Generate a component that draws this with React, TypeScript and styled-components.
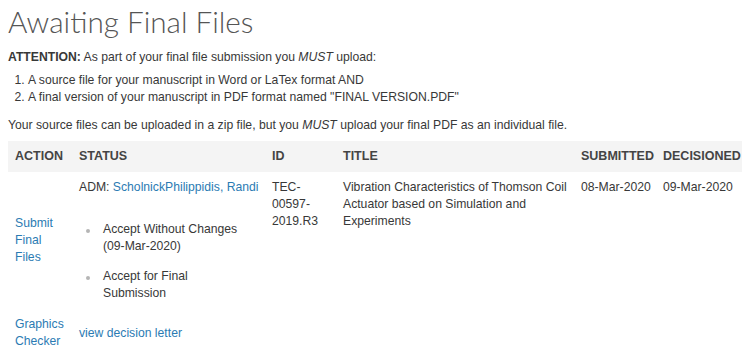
import styled, { createGlobalStyle } from "styled-components";

const GlobalStyle = createGlobalStyle`
  body {
    margin: 0;
    background: #fff;
    font-family: "Liberation Sans", Arial, sans-serif;
    font-size: 12.2px;
    line-height: 17px;
    color: #383838;
  }
`;

const Page = styled.main`
  padding: 3px 8px 0;
`;

const Title = styled.h1`
  margin: 0;
  font-family: Lato, "Open Sans", sans-serif;
  font-weight: 300;
  font-size: 29.7px;
  line-height: 37px;
  color: #555;
`;

const Para = styled.p<{ $top?: number }>`
  margin: ${({ $top }) => $top ?? 0}px 0 0;
`;

const Steps = styled.ol`
  margin: 6px 0 0;
  padding-left: 20px;
`;

const Table = styled.table`
  width: 100%;
  margin-top: 7px;
  border-collapse: collapse;
  table-layout: fixed;
`;

const Head = styled.th<{ $w: number }>`
  box-sizing: border-box;
  width: ${({ $w }) => $w}px;
  background: #f4f4f4;
  text-align: left;
  text-transform: uppercase;
  font-weight: bold;
  font-size: 12.5px;
  color: #444;
  height: 31px;
  padding: 0 0 0 7px;
`;

const Cell = styled.td<{ $middle?: boolean }>`
  padding: 7px 4px 7px 7px;
  vertical-align: ${({ $middle }) => ($middle ? "middle" : "top")};
`;

const LastRow = styled.tr`
  border-bottom: 2px solid #eee;

  td {
    padding-top: 7px;
    padding-bottom: 6px;
    vertical-align: middle;
  }
`;

const Link = styled.a`
  color: #2b7bb3;
  text-decoration: none;
  cursor: pointer;
`;

const Decisions = styled.ul`
  list-style: none;
  margin: 25px 0 0;
  padding: 0 0 0 24px;
`;

const Decision = styled.li`
  position: relative;
  & + & {
    margin-top: 13px;
  }
  &::before {
    content: "";
    position: absolute;
    left: -17px;
    top: 8px;
    width: 4px;
    height: 4px;
    border-radius: 50%;
    background: #b5b5b5;
  }
`;

export default function App() {
  return (
    <>
      <GlobalStyle />
      <Page>
        <Title>Awaiting Final Files</Title>
        <Para $top={9}>
          <b>ATTENTION:</b> As part of your final file submission you <i>MUST</i> upload:
        </Para>
        <Steps>
          <li>A source file for your manuscript in Word or LaTex format AND</li>
          <li>A final version of your manuscript in PDF format named "FINAL VERSION.PDF"</li>
        </Steps>
        <Para $top={11}>
          Your source files can be uploaded in a zip file, but you <i>MUST</i> upload your final PDF
          as an individual file.
        </Para>
        <Table>
          <thead>
            <tr>
              <Head $w={64}>Action</Head>
              <Head $w={193}>Status</Head>
              <Head $w={71}>ID</Head>
              <Head $w={238}>Title</Head>
              <Head $w={82}>Submitted</Head>
              <Head $w={86}>Decisioned</Head>
            </tr>
          </thead>
          <tbody>
            <tr>
              <Cell $middle>
                <Link>
                  Submit
                  <br />
                  Final
                  <br />
                  Files
                </Link>
              </Cell>
              <Cell>
                ADM: <Link>ScholnickPhilippidis, Randi</Link>
                <Decisions>
                  <Decision>
                    Accept Without Changes
                    <br />
                    (09-Mar-2020)
                  </Decision>
                  <Decision>
                    Accept for Final
                    <br />
                    Submission
                  </Decision>
                </Decisions>
              </Cell>
              <Cell>TEC-00597-2019.R3</Cell>
              <Cell>Vibration Characteristics of Thomson Coil Actuator based on Simulation and Experiments</Cell>
              <Cell>08-Mar-2020</Cell>
              <Cell>09-Mar-2020</Cell>
            </tr>
            <LastRow>
              <Cell>
                <Link>Graphics Checker</Link>
              </Cell>
              <Cell>
                <Link>view decision letter</Link>
              </Cell>
              <Cell />
              <Cell />
              <Cell />
              <Cell />
            </LastRow>
          </tbody>
        </Table>
      </Page>
    </>
  );
}
